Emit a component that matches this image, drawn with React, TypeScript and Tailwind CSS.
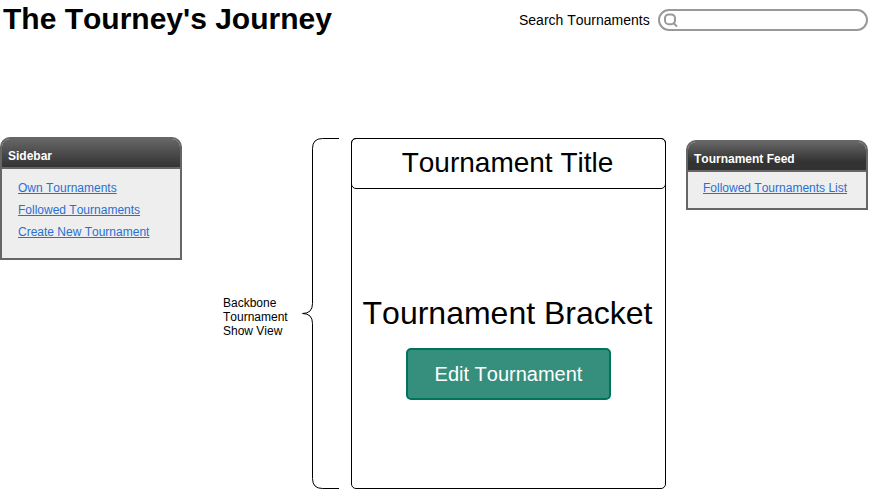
import type { ReactNode } from "react";

function Panel({ title, gradient, className, children }: { title: string; gradient: string; className: string; children: ReactNode }) {
  return (
    <section className={`w-[182px] shrink-0 overflow-hidden rounded-t-[10px] border-2 border-[#666666] bg-[#eeeeee] ${className}`}>
      <h2 className={`h-[30px] border-b-2 border-[#666666] pt-[10px] pl-[6px] text-[12px] leading-[14px] font-bold text-white ${gradient}`}>{title}</h2>
      {children}
    </section>
  );
}

function PanelLink({ children }: { children: ReactNode }) {
  return (
    <a href="#" className="block h-[22px] text-[12px] leading-[14px] whitespace-nowrap text-[#2b6fd1] underline">
      {children}
    </a>
  );
}

function SearchBar() {
  return (
    <label className="mt-[9px] flex h-[22px] items-center text-[14px] leading-[16px]">
      <span className="w-[139px] whitespace-nowrap">Search Tournaments</span>
      <span className="flex h-[22px] w-[210px] items-center rounded-full border-2 border-[#999999] bg-white pl-[4px]">
        <svg width="14" height="14" viewBox="0 0 14 14" fill="none" stroke="#999999" strokeWidth="2">
          <rect x="1" y="1.4" width="10" height="9.8" rx="3.8" />
          <path d="M9 9.5 L13 13.6" />
        </svg>
      </span>
    </label>
  );
}

function Brace() {
  return (
    <svg className="ml-[14px] shrink-0" width="38" height="351" viewBox="0 0 38 351" fill="none" stroke="#000000">
      <path d="M37 0.5 H20.5 Q10.5 0.5 10.5 10.5 V165.5 Q10.5 175.5 0.5 175.5 Q10.5 175.5 10.5 185.5 V340.5 Q10.5 350.5 20.5 350.5 H37" />
    </svg>
  );
}

export default function App() {
  return (
    <div className="h-[489px] w-[881px] overflow-hidden bg-white font-['Liberation_Sans',Arial,sans-serif] text-black [font-kerning:none]">
      <header className="flex h-[137px] items-start justify-between pr-[13px] pl-[3px]">
        <h1 className="mt-[2px] text-[30px] leading-[34px] font-bold whitespace-nowrap">The Tourney's Journey</h1>
        <SearchBar />
      </header>
      <main className="flex items-start">
        <Panel title="Sidebar" gradient="bg-linear-to-b from-[#666666] to-[#333333]" className="h-[123px]">
          <nav className="pt-[12px] pl-[16px]">
            <PanelLink>Own Tournaments</PanelLink>
            <PanelLink>Followed Tournaments</PanelLink>
            <PanelLink>Create New Tournament</PanelLink>
          </nav>
        </Panel>
        <div className="mt-px flex h-[351px] items-center pl-[41px]">
          <p className="w-[65px] pt-[6px] text-[12px] leading-[14px]">
            Backbone
            <br />
            Tournament
            <br />
            Show View
          </p>
          <Brace />
        </div>
        <article className="mt-px ml-[11px] flex h-[351px] w-[315px] shrink-0 flex-col items-center rounded-[5px] border border-black">
          <h2 className="-mx-px -mt-px h-[51px] w-[315px] shrink-0 rounded-[5px] border border-black pt-[8px] pr-[2px] text-center text-[28px] leading-[32px]">Tournament Title</h2>
          <p className="mt-[106px] pr-[2px] text-[32px] leading-[36px] whitespace-nowrap">Tournament Bracket</p>
          <button className="mt-[17px] h-[52px] w-[205px] rounded-[5px] border-2 border-[#00735c] bg-[#368f7d] text-[20px] text-white">Edit Tournament</button>
        </article>
        <Panel title="Tournament Feed" gradient="bg-linear-to-b from-[#666666] to-[#333333] to-70%" className="mt-[3px] ml-[20px] h-[70px]">
          <nav className="pt-[9px] pl-[15px]">
            <PanelLink>Followed Tournaments List</PanelLink>
          </nav>
        </Panel>
      </main>
    </div>
  );
}
